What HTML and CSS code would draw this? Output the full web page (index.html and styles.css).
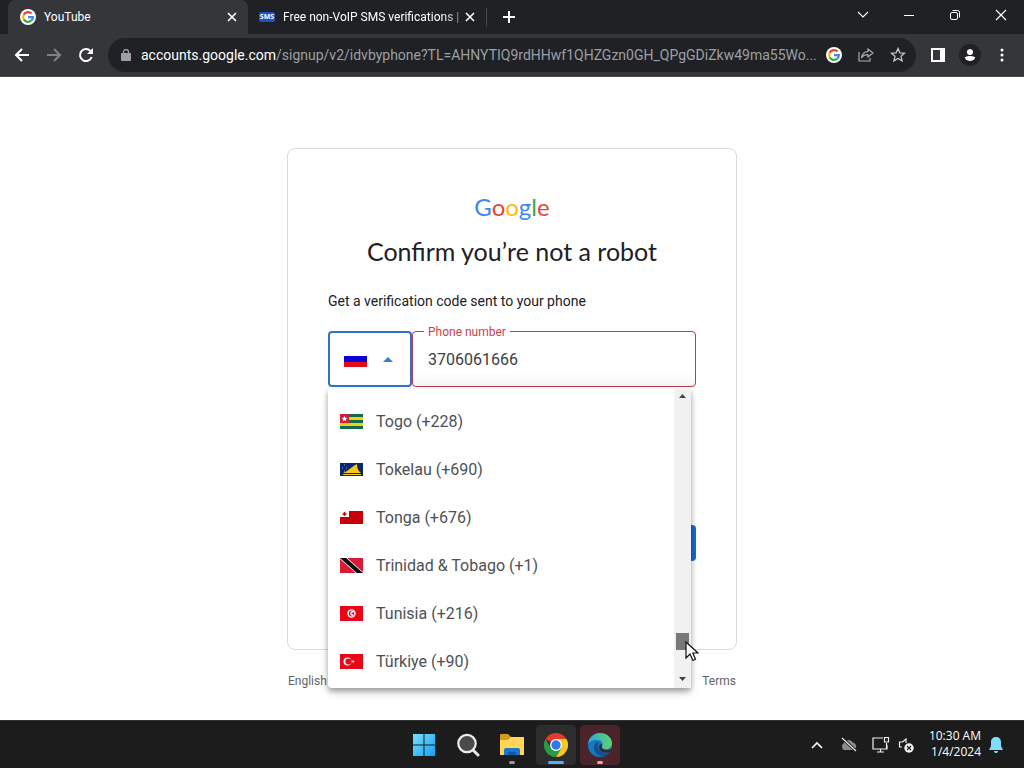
FILE: index.html
```html
<!DOCTYPE html>
<html lang="en">
<head>
<meta charset="utf-8">
<title>Confirm you’re not a robot</title>
<link rel="stylesheet" href="styles.css">
</head>
<body>
<svg class="defs" aria-hidden="true">
  <symbol id="google-g" viewBox="0 0 16 16">
    <circle cx="8" cy="8" r="8" fill="#fff"/>
    <g fill="none" stroke-width="2.2">
      <path d="M11.6 4.6A4.9 4.9 0 0 0 3.7 5.7" stroke="#ea4335"/>
      <path d="M3.7 5.7a4.9 4.9 0 0 0 0 4.6" stroke="#fbbc05"/>
      <path d="M3.7 10.3a4.9 4.9 0 0 0 7.5 1.4" stroke="#34a853"/>
      <path d="M11.2 11.7A4.9 4.9 0 0 0 12.9 8.2H8" stroke="#4285f4"/>
    </g>
  </symbol>
  <symbol id="close" viewBox="0 0 10 10"><path d="M1 1l8 8M9 1L1 9" stroke="currentColor" stroke-width="1.6"/></symbol>
</svg>

<header class="tabs">
  <div class="tab tab-active">
    <svg class="icon16"><use href="#google-g"/></svg>
    <span class="tab-title">YouTube</span>
    <button class="tab-close" aria-label="Close tab"><svg width="10" height="10"><use href="#close"/></svg></button>
  </div>
  <div class="tab tab-idle">
    <span class="sms">SMS</span>
    <span class="tab-title fade">Free non-VoIP SMS verifications |</span>
    <button class="tab-close" aria-label="Close tab"><svg width="10" height="10"><use href="#close"/></svg></button>
  </div>
  <button class="new-tab" aria-label="New tab"><svg width="12" height="12" viewBox="0 0 12 12"><path d="M6 0v12M0 6h12" stroke="#fff" stroke-width="2"/></svg></button>
  <div class="window-buttons">
    <button aria-label="Search tabs"><svg width="12" height="12" viewBox="0 0 12 12"><path d="M1 3l5 5 5-5" fill="none" stroke="#fff" stroke-width="1.1"/></svg></button>
    <button aria-label="Minimize"><svg width="10" height="12" viewBox="0 0 10 12"><path d="M0 6.5h10" stroke="#fff"/></svg></button>
    <button aria-label="Restore"><svg width="12" height="12" viewBox="0 0 12 12"><g fill="none" stroke="#fff"><rect x="1.500" y="3.500" width="7" height="7" rx="1.500"/><path d="M3.500 1.500h5a2 2 0 0 1 2 2v5"/></g></svg></button>
    <button aria-label="Close"><svg width="12" height="12" viewBox="0 0 12 12"><path d="M1 1l10 10M11 1L1 11" stroke="#fff" stroke-width="1.200"/></svg></button>
  </div>
</header>

<nav class="toolbar">
  <button aria-label="Back"><svg width="16" height="16" viewBox="0 0 16 16"><path d="M15 8H2M8 2L2 8l6 6" fill="none" stroke="#fff" stroke-width="2"/></svg></button>
  <button aria-label="Forward"><svg width="16" height="16" viewBox="0 0 16 16"><path d="M1 8h13M8 2l6 6-6 6" fill="none" stroke="#7f8285" stroke-width="2"/></svg></button>
  <button aria-label="Reload"><svg width="16" height="16" viewBox="0 0 16 16"><path d="M13.700 10A6 6 0 1 1 12.400 3.900L14 5.500" fill="none" stroke="#fff" stroke-width="2"/><path d="M15 1v6H9z" fill="#fff"/></svg></button>
  <div class="omnibox">
    <svg width="10" height="12" viewBox="0 0 10 12"><rect y="4" width="10" height="8" rx="1" fill="#9aa0a6"/><path d="M2.500 5V3a2.500 2.500 0 0 1 5 0v2" fill="none" stroke="#9aa0a6" stroke-width="1.300"/></svg>
    <span class="url"><b>accounts.google.com</b>/signup/v2/idvbyphone?TL=AHNYTIQ9rdHHwf1QHZGzn0GH_QPgGDiZkw49ma55Wo...</span>
    <button aria-label="Google search"><svg class="icon16"><use href="#google-g"/></svg></button>
    <button aria-label="Share"><svg width="16" height="16" viewBox="0 0 16 16"><g fill="none" stroke="#a9acb0" stroke-width="1.200"><path d="M1 5v9h11v-3"/><path d="M10 2l5 4-5 4V7.700C7 7.500 5 8.500 3.500 11 4 7 6.500 4.700 10 4.300z"/></g></svg></button>
    <button aria-label="Bookmark"><svg width="16" height="16" viewBox="0 0 16 16"><path d="M8 1.500l1.900 4.300 4.700.400-3.600 3.100 1.100 4.600L8 11.500l-4.100 2.400L5 9.300 1.400 6.200l4.700-.400z" fill="none" stroke="#c4c7ca" stroke-width="1.300"/></svg></button>
  </div>
  <button aria-label="Side panel"><svg width="14" height="14" viewBox="0 0 14 14"><path fill="#fff" fill-rule="evenodd" d="M0 0h14v14H0zM2 2v10h7V2z"/></svg></button>
  <button class="avatar" aria-label="Profile"><svg width="12" height="12" viewBox="0 0 12 12" fill="#fff"><circle cx="6" cy="3" r="3"/><path d="M0 12v-2c0-4 12-4 12 0v2z"/></svg></button>
  <button aria-label="Menu"><svg width="4" height="14" viewBox="0 0 4 14" fill="#fff"><circle cx="2" cy="2" r="1.500"/><circle cx="2" cy="7" r="1.500"/><circle cx="2" cy="12" r="1.500"/></svg></button>
</nav>

<main class="page">
  <form class="card">
    <div class="logo" aria-label="Google"><span class="b">G</span><span class="r">o</span><span class="y">o</span><span class="b">g</span><span class="g">l</span><span class="r">e</span></div>
    <h1>Confirm you’re not a robot</h1>
    <p>Get a verification code sent to your phone</p>
    <div class="phone">
      <button type="button" class="country" aria-label="Country">
        <svg width="23" height="15" viewBox="0 0 23 15"><path fill="#fff" d="M0 0h23v5H0z"/><path fill="#0b00d8" d="M0 4h23v6H0z"/><path fill="#e30a1a" d="M0 10h23v5H0z"/></svg>
        <svg width="10" height="6" viewBox="0 0 10 6"><path d="M0 6l5-5 5 5z" fill="#3b78dc"/></svg>
      </button>
      <div class="field">
        <label for="phone">Phone number</label>
        <input id="phone" type="tel" value="3706061666">
      </div>
      <div class="menu">
        <ul>
          <li><svg class="flag" viewBox="0 0 23 15"><path fill="#116c4b" d="M0 0h23v15H0z"/><path fill="#f5cf14" d="M0 3h23v3H0zM0 9h23v3H0z"/><path fill="#d02040" d="M0 0h9v9H0z"/><path fill="#fff" d="M4.500 2l.800 1.800 2 .2-1.500 1.300.500 2-1.800-1-1.800 1 .500-2L1.700 4l2-.2z"/></svg>Togo (+228)</li>
          <li><svg class="flag flag-short" viewBox="0 0 23 13"><path fill="#0b2670" d="M0 0h23v13H0z"/><path fill="#f6cb16" d="M3 10C9 8 12 3 17 1c0 4 1 7 4 9zM2 11h19v1H4z"/><path stroke="#8fa0c8" d="M2 5h1M4 2h1M6 5h1M4 8h1"/></svg>Tokelau (+690)</li>
          <li><svg class="flag flag-short" viewBox="0 0 23 13"><path fill="#c80008" d="M0 0h23v13H0z"/><path fill="#fff" d="M0 0h9v6H0z"/><path stroke="#c80008" stroke-width="1.500" d="M4.500 1v4M2.500 3h4"/></svg>Tonga (+676)</li>
          <li><svg class="flag" viewBox="0 0 23 15"><path fill="#d81c38" d="M0 0h23v15H0z"/><path stroke="#fff" stroke-width="5.500" d="M2-1l19 17"/><path stroke="#080808" stroke-width="4" d="M2-1l19 17"/></svg>Trinidad &amp; Tobago (+1)</li>
          <li><svg class="flag" viewBox="0 0 23 15"><path fill="#e80618" d="M0 0h23v15H0z"/><circle cx="11.500" cy="7.500" r="4.200" fill="#fff"/><circle cx="11.800" cy="7.500" r="3" fill="#e80618"/><circle cx="12.600" cy="7.500" r="2.400" fill="#fff"/><path fill="#e80618" d="M11 7.500l3-1.500v3z"/></svg>Tunisia (+216)</li>
          <li><svg class="flag" viewBox="0 0 23 15"><path fill="#e80618" d="M0 0h23v15H0z"/><circle cx="7.500" cy="7.500" r="4" fill="#fff"/><circle cx="8.500" cy="7.500" r="3.100" fill="#e80618"/><path fill="#fff" d="M11 7.500l1.500-.500.700-1.400.300 1.500 1.400.400-1.400.500-.300 1.500-.700-1.400z"/></svg>Türkiye (+90)</li>
        </ul>
        <div class="scrollbar">
          <svg width="7" height="4" viewBox="0 0 7 4"><path d="M0 4l3.500-4L7 4z" fill="#444"/></svg>
          <span class="thumb"></span>
          <svg width="7" height="4" viewBox="0 0 7 4"><path d="M0 0h7L3.500 4z" fill="#444"/></svg>
        </div>
        <svg class="cursor" viewBox="0 0 14 22"><path d="M1 1v16l4-4 3 6.500 2.500-1.200L7.800 12H13z" fill="#fff" stroke="#111" stroke-width="1.200"/></svg>
      </div>
    </div>
    <button type="button" class="next" aria-label="Next"></button>
  </form>
  <footer>
    <select aria-label="Language"><option>English</option></select>
    <a href="#">Terms</a>
  </footer>
</main>

<div class="taskbar">
  <div class="apps">
    <button aria-label="Start"><svg width="24" height="24" viewBox="0 0 24 24"><defs><linearGradient id="win" x2="1" y2="1" gradientUnits="userSpaceOnUse" x1="0" y1="0" gradientTransform="scale(24)"><stop stop-color="#7be3fd"/><stop offset="1" stop-color="#149bf3"/></linearGradient></defs><path fill="url(#win)" d="M1 1h10.500v10.500H1zM12.500 1H23v10.500H12.500zM1 12.500h10.500V23H1zM12.500 12.500H23V23H12.500z"/></svg></button>
    <button aria-label="Search"><svg width="24" height="24" viewBox="0 0 24 24"><path d="M17 17l5 5" stroke="#e6e6e6" stroke-width="3" stroke-linecap="round"/><circle cx="11" cy="10.500" r="8.700" fill="#4a4a4a" stroke="#ececec" stroke-width="2.200"/></svg></button>
    <button class="run" aria-label="Files"><svg width="26" height="24" viewBox="0 0 26 24"><path fill="#d89a1a" d="M1 2q0-1 1-1h7l3 3H25v5H1z"/><path fill="#ffd65a" d="M1 7h8l3-3h12q1 0 1 1v17H1z"/><path fill="#1976c8" d="M5 22v-5q0-2 2-2h12q2 0 2 2v5z"/><path fill="#0f58a4" d="M9 19h8v3H9z"/></svg></button>
    <button class="run current" aria-label="Chrome"><svg width="24" height="24" viewBox="0 0 24 24"><path fill="#e33b2e" d="M12 12L1.600 6a12 12 0 0 1 20.800 0z"/><path fill="#f9c81e" d="M12 6h10.400A12 12 0 0 1 12 24l5.200-9z"/><path fill="#2a9c48" d="M1.600 6A12 12 0 0 0 12 24l5.200-9H6.800z"/><circle cx="12" cy="12" r="6" fill="#fff"/><circle cx="12" cy="12" r="4.700" fill="#3078ea"/></svg></button>
    <button class="run alert" aria-label="Edge"><svg width="24" height="24" viewBox="0 0 24 24"><defs><linearGradient id="edge"><stop stop-color="#2aa8dc"/><stop offset="1" stop-color="#5fd46c"/></linearGradient></defs><circle cx="12" cy="12" r="12" fill="#1878c4"/><path fill="url(#edge)" d="M0 11C1 4 6 0 12 0c7 0 12 5 12 10 0 4-3 6-6 6-3 0-5-1-4-3 2-3-1-6-5-6-5 0-8 2-9 4z"/><path fill="#114f96" d="M9 9c-5 3-4 11 3 14 4 1 8-1 10-4-5 2-11 0-12-5-.4-2 0-4 1-5z"/><path fill="#3b2529" d="M14 13c-1 2 1 4 5 4 2 0 4-1 5-2-.4 1-1 3-2 4-6 2-11-1-11-5 0-2 1-3 2-3 1 .300 1.500 1 1 2z"/></svg></button>
  </div>
  <div class="tray">
    <svg width="12" height="8" viewBox="0 0 12 8"><path d="M1 7l5-5 5 5" fill="none" stroke="#fff" stroke-width="1.600"/></svg>
    <svg width="18" height="16" viewBox="0 0 18 16"><path fill="#8b8b8b" d="M4 13a4 4 0 0 1 0-7 5 5 0 0 1 9-.5A4 4 0 0 1 14 13z"/><path d="M2 1l14 13" stroke="#1c1c1c" stroke-width="3"/><path d="M2 1l14 13" stroke="#e8e8e8" stroke-width="1.200"/></svg>
    <svg width="18" height="18" viewBox="0 0 18 18"><g fill="none" stroke="#f0f0f0" stroke-width="1.200"><path d="M11 2H1v11h14V9M5 16h7M8.500 13v3M14.500 7v6"/><path d="M12.500 1.500h4V6h-4z"/></g></svg>
    <svg width="16" height="16" viewBox="0 0 16 16"><path d="M8 6V2L4.500 5H1.500v5H4" fill="none" stroke="#f0f0f0" stroke-width="1.200"/><circle cx="11" cy="11" r="4.700" fill="#f2f2f2"/><path d="M9 9l4 4M13 9l-4 4" stroke="#222" stroke-width="1.200"/></svg>
    <div class="clock"><time>10:30 AM</time><time>1/4/2024</time></div>
    <svg width="14" height="16" viewBox="0 0 14 16" fill="#7fdcfa"><path d="M7 0c3 0 5 2 5 5v4l2 4H0l2-4V5c0-3 2-5 5-5zM5 14h4c0 1.500-1 2-2 2s-2-.500-2-2z"/></svg>
  </div>
</div>
</body>
</html>
```

FILE: styles.css
```css
* { box-sizing: border-box; }

body {
  margin: 0;
  height: 100vh;
  display: flex;
  flex-direction: column;
  overflow: hidden;
  background: #fff;
  font-family: Roboto, "Liberation Sans", sans-serif;
}

button {
  border: 0;
  padding: 0;
  background: none;
  color: #fff;
  display: flex;
  align-items: center;
  justify-content: center;
}

.defs { position: absolute; width: 0; height: 0; }
.icon16 { width: 16px; height: 16px; flex: none; }

/* Tab strip */
.tabs {
  display: flex;
  height: 34px;
  background: #202124;
  color: #fff;
  font: 12px Roboto, sans-serif;
  flex: none;
}

.tab { display: flex; align-items: center; padding-right: 10px; }
.tab-active {
  width: 240px;
  margin-left: 8px;
  padding-left: 12px;
  gap: 8px;
  background: #35363a;
  border-radius: 8px 8px 0 0;
}
.tab-idle {
  width: 239px;
  padding-left: 11px;
  border-right: 1px solid #4a4b4e;
  height: 18px;
  align-self: center;
}
.tab-title { flex: 1; min-width: 0; white-space: nowrap; overflow: hidden; }
.fade { mask-image: linear-gradient(to right, #000 88%, transparent 105%); }
.tab-close { width: 12px; height: 16px; }
.sms {
  width: 16px;
  margin-right: 8px;
  text-align: center;
  border-radius: 2px;
  background: #2450c0;
  font: bold 7px/10px "Open Sans", sans-serif;
}
.new-tab { width: 44px; }
.window-buttons { display: flex; margin-left: auto; align-items: center; padding-bottom: 4px; }
.window-buttons button { width: 46px; height: 28px; }

/* Address bar */
.toolbar {
  display: flex;
  align-items: center;
  height: 43px;
  padding: 0 6px;
  background: #35363a;
  border-bottom: 1px solid #4a4b4e;
  flex: none;
}
.toolbar button { width: 32px; height: 32px; flex: none; }
.omnibox {
  flex: 1;
  min-width: 0;
  height: 34px;
  margin: 0 6px;
  padding: 0 2px 0 13px;
  display: flex;
  align-items: center;
  border-radius: 17px;
  background: #202124;
}
.url {
  flex: 1;
  min-width: 0;
  margin-left: 10px;
  overflow: hidden;
  text-overflow: ellipsis;
  white-space: nowrap;
  color: #9aa0a6;
  font: 14px/20px Roboto, sans-serif;
}
.url b { font-weight: normal; color: #fff; }
.toolbar .avatar svg { padding: 5px; width: 22px; height: 22px; border-radius: 50%; background: #202124; }

/* Sign-up page */
.page {
  flex: 1;
  min-height: 0;
  padding-top: 71px;
  display: flex;
  flex-direction: column;
  align-items: center;
}
.card {
  width: 450px;
  max-width: 100%;
  padding: 38px 40px 88px;
  border: 1px solid #dadce0;
  border-radius: 8px;
}
.logo {
  text-align: center;
  font: 24px/40px Lato, sans-serif;
}
.b { color: #4285f4; }
.r { color: #ea4335; }
.y { color: #fbbc05; }
.g { color: #34a853; }

h1 {
  margin: 8px 0 0;
  text-align: center;
  font: 25px/32px Lato, sans-serif;
  color: #202124;
  white-space: nowrap;
}
p {
  margin: 24px 0 20px;
  font-size: 14px;
  line-height: 20px;
  color: #202124;
}

.phone { position: relative; display: flex; height: 56px; }
.country {
  width: 84px;
  padding-right: 4px;
  gap: 16px;
  border: 2px solid #2f70cb;
  border-radius: 4px;
}
.field { position: relative; flex: 1; }
.field label {
  position: absolute;
  top: -7px;
  left: 12px;
  padding: 0 4px;
  background: #fff;
  color: #c9414f;
  font-size: 12px;
  line-height: 16px;
}
.field input {
  width: 100%;
  height: 56px;
  padding: 0 15px;
  border: 1px solid #bd3a48;
  border-radius: 4px;
  background: linear-gradient(#fff 75%, #f5f5f5);
  color: #3c4043;
  font: 16px Roboto, sans-serif;
  outline: 0;
}

.menu {
  position: absolute;
  z-index: 1;
  top: 58px;
  left: 0;
  width: 363px;
  display: flex;
  background: #fff;
  border-radius: 0 0 4px 4px;
  box-shadow: 0 3px 5px rgba(0, 0, 0, .3), 0 5px 10px rgba(0, 0, 0, .14);
}
.menu ul { flex: 1; margin: 0; padding: 8px 0 3px; list-style: none; }
.menu li {
  display: flex;
  align-items: center;
  gap: 13px;
  height: 48px;
  padding-left: 12px;
  font-size: 16px;
  color: #4d5156;
}
.flag { width: 23px; height: 15px; }
.flag-short { height: 13px; }
.scrollbar {
  width: 17px;
  padding: 5px 0 7px;
  display: flex;
  flex-direction: column;
  align-items: center;
  background: #f1f1f1;
}
.thumb { width: 13px; height: 17px; margin: auto 0 27px; background: #787878; }
.cursor { position: absolute; left: 357px; top: 252px; width: 14px; height: 22px; }

.next {
  width: 72px;
  height: 36px;
  margin: 138px 0 0 auto;
  border-radius: 4px;
  background: #1a6ad0;
}
footer {
  width: 450px;
  max-width: 100%;
  margin-top: 21px;
  padding: 0 1px;
  display: flex;
  justify-content: space-between;
  font-size: 12px;
  line-height: 20px;
}
footer select {
  appearance: none;
  border: 0;
  padding: 0;
  background: none;
  color: #5f6368;
  font: 12px/20px Roboto, sans-serif;
}
footer a { color: #5f6368; text-decoration: none; }

/* Taskbar */
.taskbar {
  flex: none;
  display: grid;
  grid-template-columns: 1fr auto 1fr;
  align-items: center;
  height: 48px;
  background: #1c1c1c;
  border-top: 1px solid #333;
  color: #fff;
}
.apps { grid-column: 2; display: flex; gap: 4px; }
.apps button { position: relative; width: 40px; height: 40px; border-radius: 4px; }
.apps .current { background: #2d2d2d; }
.apps .alert { background: #4a2429; }
.run::after {
  content: "";
  position: absolute;
  left: 50%;
  bottom: 1px;
  width: 6px;
  height: 3px;
  border-radius: 2px;
  background: #999;
  transform: translateX(-50%);
}
.current::after { width: 16px; background: #4cb4f2; }
.alert::after { background: #f2a0a8; }
.tray {
  justify-self: end;
  display: flex;
  align-items: center;
  padding-right: 21px;
}
.tray > svg:nth-child(2) { margin-left: 17px; }
.tray > svg:nth-child(3) { margin-left: 14px; }
.tray > svg:nth-child(4) { margin-left: 8px; }
.clock {
  display: flex;
  flex-direction: column;
  margin: 0 8px 2px 15px;
  text-align: right;
  font: 12px/16px "Open Sans", "Noto Sans", sans-serif;
}
```
